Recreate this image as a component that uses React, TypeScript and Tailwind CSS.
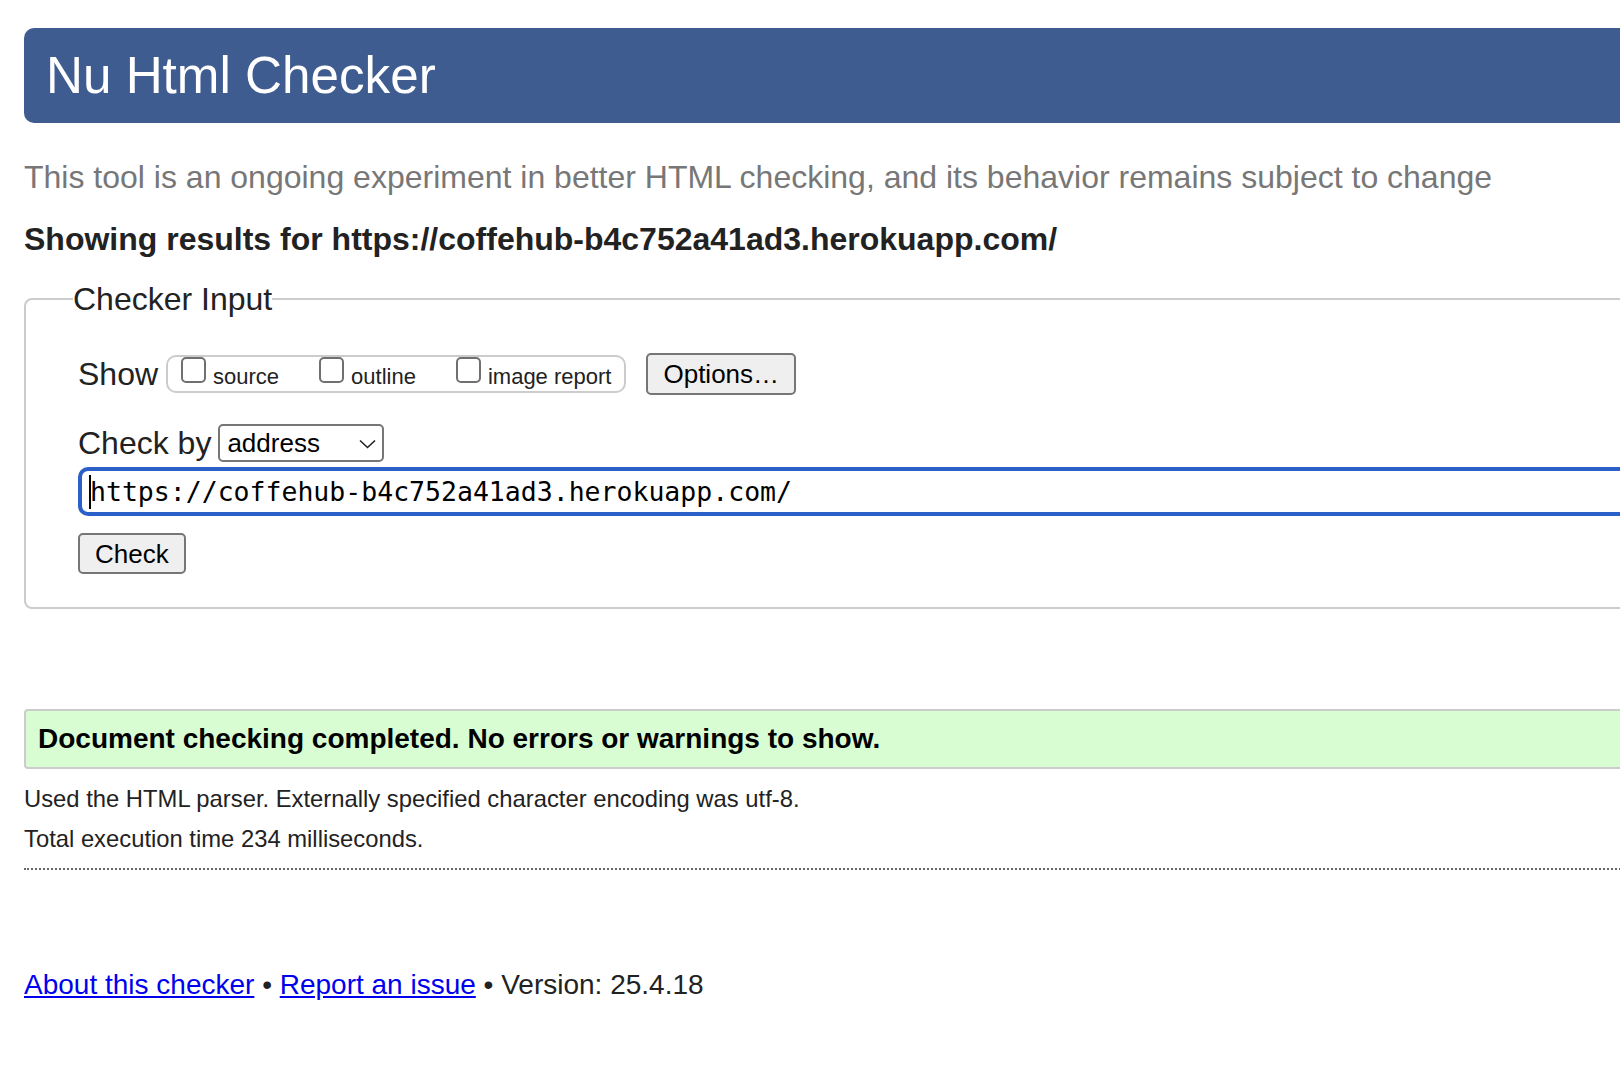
import { useState } from 'react';

interface ShowOption {
  id: string;
  label: string;
}

const SHOW_OPTIONS: ShowOption[] = [
  { id: 'showsource', label: 'source' },
  { id: 'showoutline', label: 'outline' },
  { id: 'showimagereport', label: 'image report' },
];

const CHECKED_URL = 'https://coffehub-b4c752a41ad3.herokuapp.com/';

export default function App() {
  const [doc, setDoc] = useState(CHECKED_URL);
  const [checkBy, setCheckBy] = useState('address');
  const [shown, setShown] = useState<Record<string, boolean>>({});

  return (
    <div className="min-h-screen w-full overflow-hidden bg-white font-['Liberation_Sans',Arial,sans-serif] text-[#222]">
      <div className="w-[1780px] pl-[24px]">
        {/* Title bar */}
        <h1 className="mt-[28px] flex h-[95px] items-center rounded-[10px] bg-[#3e5c8f] pl-[22px] text-[51.2px] font-normal leading-none text-white">
          Nu Html Checker
        </h1>

        <p className="mt-[38px] text-[32px] leading-none text-[#777]">
          This tool is an ongoing experiment in better HTML checking, and its behavior remains subject to change
        </p>

        <h2 className="mt-[30px] text-[32px] font-bold leading-none text-[#222]">
          Showing results for {CHECKED_URL}
        </h2>

        {/* Checker input form */}
        <form onSubmit={(e) => e.preventDefault()}>
          <fieldset className="mt-[28px] rounded-[8px] border-2 border-[#ccc] pb-[33px] pl-[47px] pt-[38px]">
            <legend className="text-[32px] leading-none">Checker Input</legend>

            <div className="pl-[5px]">
              <div className="flex h-[42px] items-center">
                <span className="text-[32px] leading-none">Show</span>
                <div className="ml-[8px] flex h-[38px] items-start gap-[40px] rounded-[10px] border-2 border-[#ccc] pl-[13px] pr-[13px]">
                  {SHOW_OPTIONS.map((opt) => (
                    <label key={opt.id} htmlFor={opt.id} className="flex items-end gap-[7px]">
                      <input
                        id={opt.id}
                        type="checkbox"
                        checked={!!shown[opt.id]}
                        onChange={(e) => setShown({ ...shown, [opt.id]: e.target.checked })}
                        className="mb-[5px] h-[26px] w-[25px] appearance-none rounded-[5px] border-2 border-[#707070] bg-white"
                      />
                      <span className="text-[22px] leading-none">{opt.label}</span>
                    </label>
                  ))}
                </div>
                <button
                  type="button"
                  className="ml-[20px] h-[42px] rounded-[5px] border-2 border-[#767676] bg-[#efefef] px-[15px] text-[26px] leading-none text-black"
                >
                  Options…
                </button>
              </div>

              <div className="mt-[29px] flex h-[38px] items-center gap-[7px]">
                <label htmlFor="docselect" className="text-[32px] leading-none">
                  Check by
                </label>
                <div className="relative">
                  <select
                    id="docselect"
                    value={checkBy}
                    onChange={(e) => setCheckBy(e.target.value)}
                    className="h-[38px] w-[166px] appearance-none rounded-[5px] border-2 border-[#767676] bg-white pl-[7px] text-[26px] leading-none text-black"
                  >
                    <option value="address">address</option>
                    <option value="file">file upload</option>
                    <option value="textarea">text input</option>
                  </select>
                  <svg
                    className="pointer-events-none absolute right-[8px] top-[15px]"
                    width="17"
                    height="10"
                    viewBox="0 0 17 10"
                    fill="none"
                    aria-hidden="true"
                  >
                    <polyline points="1,1.5 8.5,8.5 16,1.5" stroke="#222" strokeWidth="1.6" />
                  </svg>
                </div>
              </div>

              <div className="relative mt-[5px]">
                <input
                  type="url"
                  value={doc}
                  onChange={(e) => setDoc(e.target.value)}
                  className="h-[49px] w-full rounded-[10px] border-4 border-[#2b60c8] pl-[8px] font-['DejaVu_Sans_Mono',Menlo,monospace] text-[26.5px] leading-none text-black outline-none"
                />
                {/* text caret */}
                <span className="pointer-events-none absolute left-[11px] top-[8px] h-[34px] w-[2px] bg-black" />
              </div>

              <button
                type="submit"
                className="mt-[17px] block h-[41px] rounded-[5px] border-2 border-[#767676] bg-[#efefef] px-[15px] text-[26px] leading-none text-black"
              >
                Check
              </button>
            </div>
          </fieldset>
        </form>

        {/* Result summary */}
        <div className="mt-[100px] flex h-[60px] items-center rounded-[4px] border-2 border-[#ccc] bg-[#d8fdd3] pl-[12px]">
          <p className="text-[28px] font-bold leading-none text-black">
            Document checking completed. No errors or warnings to show.
          </p>
        </div>

        <p className="mt-[18px] text-[23.8px] leading-none">
          Used the HTML parser. Externally specified character encoding was utf-8.
        </p>
        <p className="mt-[16px] text-[23.8px] leading-none">Total execution time 234 milliseconds.</p>

        <hr className="mt-[17px] border-0 border-t-2 border-dotted border-[#666]" />

        <p className="mt-[101px] text-[28px] leading-none">
          <a href="#about" className="text-[#0000ee] underline">
            About this checker
          </a>{' '}
          •{' '}
          <a href="#issue" className="text-[#0000ee] underline">
            Report an issue
          </a>{' '}
          • Version: 25.4.18
        </p>
      </div>
    </div>
  );
}
